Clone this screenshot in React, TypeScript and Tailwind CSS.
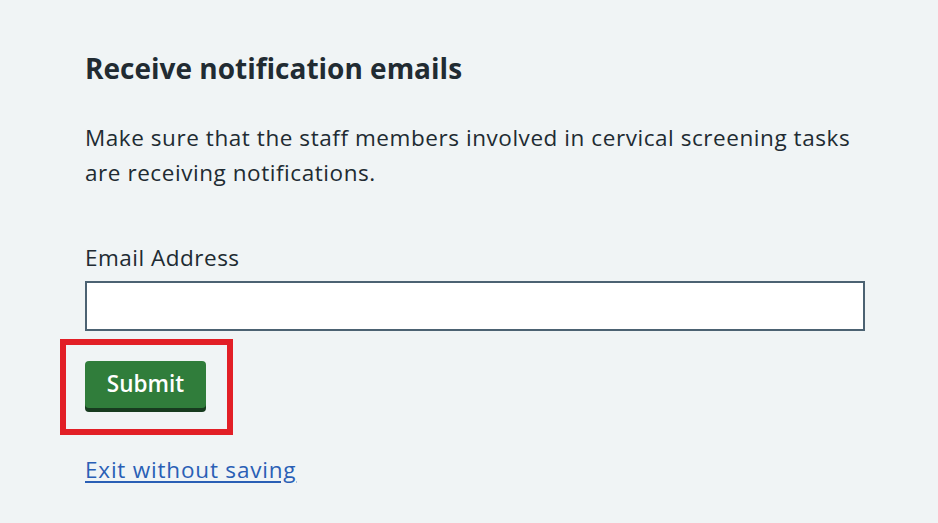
import React from "react";

export default function App() {
  return (
    <div
      className="relative min-h-[523px] w-full bg-[#f0f4f5] pl-[85px] pt-[52px] text-[#212b32]"
      style={{ fontFamily: '"Open Sans", "Noto Sans", sans-serif' }}
    >
      <h2 className="text-[28px] leading-[32px] font-bold">Receive notification emails</h2>
      <p className="mt-[36px] w-[800px] text-[22.5px] leading-[35px] tracking-[0.56px]">
        Make sure that the staff members involved in cervical screening tasks are receiving notifications.
      </p>
      <label htmlFor="email" className="mt-[50px] block text-[22.5px] leading-[35px] tracking-[0.5px]">
        Email Address
      </label>
      <input
        id="email"
        type="text"
        className="mt-[6px] block h-[50px] w-[780px] border-2 border-[#4c6272] bg-white outline-none"
      />
      <div className="relative mt-[30px] w-fit">
        <button
          type="button"
          className="flex h-[47px] w-[121px] items-center justify-center rounded-[4px] bg-[#307d3b] pb-[2px] text-[22.5px] font-semibold text-white shadow-[0_4px_0_#173b1f]"
        >
          Submit
        </button>
        <div className="pointer-events-none absolute left-[-25px] top-[-22px] h-[96px] w-[173px] border-[6px] border-[#e21f26]" />
      </div>
      <a
        href="#"
        className="mt-[44px] block w-fit text-[22.5px] leading-[35px] tracking-[0.8px] text-[#2a5fb5] underline underline-offset-[3px]"
      >
        Exit without saving
      </a>
    </div>
  );
}
